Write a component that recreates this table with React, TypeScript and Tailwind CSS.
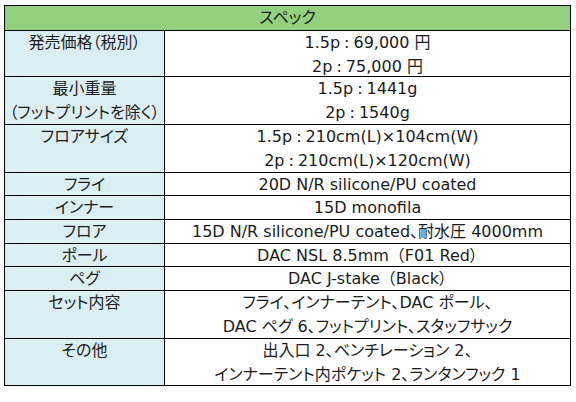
import React from "react";

type Row = { label: string[]; value: string[]; h: string };

const rows: Row[] = [
  { label: ["発売価格（税別）"], value: ["1.5p：69,000 円", "2p：75,000 円"], h: "h-[46px]" },
  { label: ["最小重量", "（フットプリントを除く）"], value: ["1.5p：1441g", "2p：1540g"], h: "h-[48px]" },
  { label: ["フロアサイズ"], value: ["1.5p：210cm(L)×104cm(W)", "2p：210cm(L)×120cm(W)"], h: "h-[48px]" },
  { label: ["フライ"], value: ["20D N/R silicone/PU coated"], h: "h-[23px]" },
  { label: ["インナー"], value: ["15D monofila"], h: "h-[24px]" },
  { label: ["フロア"], value: ["15D N/R silicone/PU coated、耐水圧 4000mm"], h: "h-[24px]" },
  { label: ["ポール"], value: ["DAC NSL 8.5mm（F01 Red）"], h: "h-[23px]" },
  { label: ["ペグ"], value: ["DAC J-stake（Black）"], h: "h-[24px]" },
  { label: ["セット内容"], value: ["フライ、インナーテント、DAC ポール、", "DAC ペグ 6、フットプリント、スタッフサック"], h: "h-[48px]" },
  { label: ["その他"], value: ["出入口 2、ベンチレーション 2、", "インナーテント内ポケット 2、ランタンフック 1"], h: "h-[46px]" },
];

function Txt({ t, wide }: { t: string; wide: boolean }) {
  if (!wide) return <>{t}</>;
  const parts = t.split(/([：（])/);
  return (
    <>
      {parts.map((p, i) =>
        p === "：" ? (
          <span key={i} className="mx-[4px]">:</span>
        ) : p === "（" ? (
          <span key={i} className="[font-feature-settings:normal]">{p}</span>
        ) : (
          <React.Fragment key={i}>{p}</React.Fragment>
        )
      )}
    </>
  );
}

export default function App() {
  return (
    <div className="w-[576px] h-[402px] bg-white pl-[4px] pt-[5px] text-[#1c1c1c] text-[16px] leading-[24px] [font-family:'DejaVu_Sans','Noto_Sans_CJK_JP',sans-serif] [font-feature-settings:'palt']">
      <div className="w-[567px] border border-black flex flex-col">
        <div className="h-[25px] bg-[#92d07d] border-b border-black flex items-center justify-center">
          スペック
        </div>
        {rows.map((r, i) => (
          <div
            key={i}
            className={`flex ${r.h} ${i < rows.length - 1 ? "border-b border-black" : ""}`}
          >
            <div className="w-[160px] shrink-0 bg-[#daeef3] border-r border-black flex flex-col items-center overflow-visible">
              {r.label.map((t, j) => (
                <div key={j} className="h-[24px] leading-[24px] whitespace-nowrap shrink-0">
                  <Txt t={t} wide={false} />
                </div>
              ))}
            </div>
            <div className="flex-1 flex flex-col items-center overflow-visible">
              {r.value.map((t, j) => (
                <div key={j} className="h-[24px] leading-[24px] whitespace-nowrap shrink-0">
                  <Txt t={t} wide={true} />
                </div>
              ))}
            </div>
          </div>
        ))}
      </div>
    </div>
  );
}
